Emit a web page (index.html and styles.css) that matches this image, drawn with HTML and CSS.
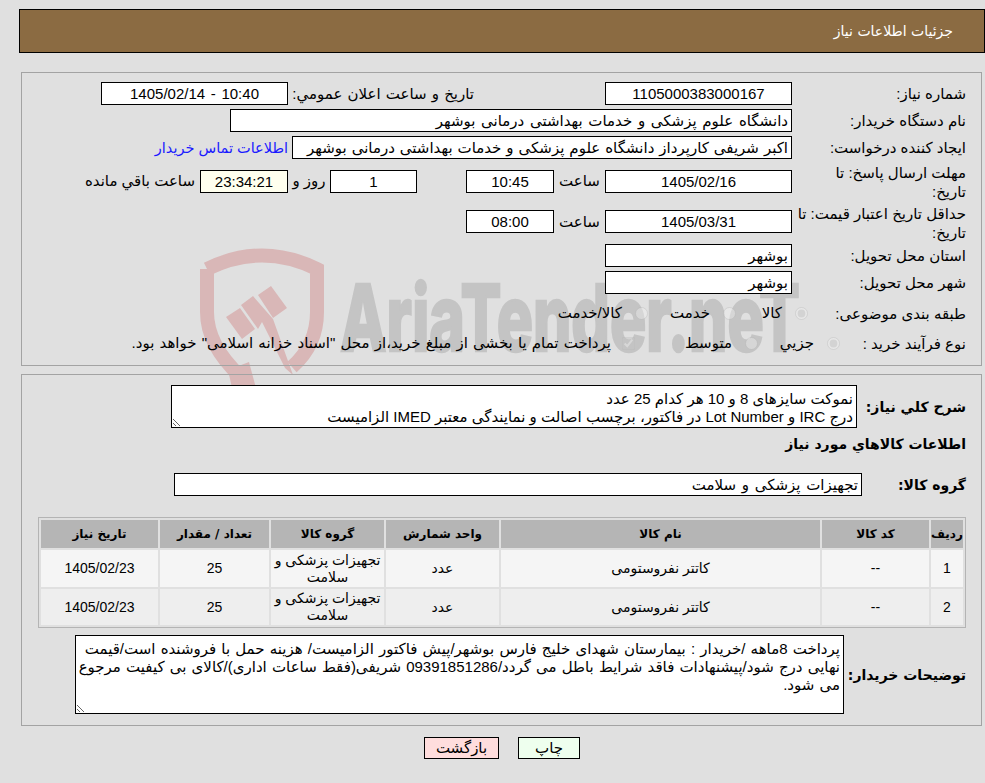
FILE: index.html
```html
<!DOCTYPE html>
<html lang="fa" dir="rtl">
<head>
    <meta charset="UTF-8">
    <meta name="viewport" content="width=device-width, initial-scale=1.0">
    <title>جزئیات اطلاعات نیاز</title>
    <link rel="stylesheet" href="styles.css">
</head>
<body>
    <!-- watermark sits behind the panels -->
    <svg class="watermark" width="985" height="783" viewBox="0 0 985 783" aria-hidden="true">
        <g fill="none" stroke="#d9b7b7" stroke-width="14">
            <path d="M207 269 Q262 242 317 269 L317 312 Q317 345 292 367"/>
            <path d="M207 269 L207 312 Q207 345 240 376"/>
        </g>
        <g fill="#d9b7b7">
            <polygon points="226,317 240,308 255,329 242,339"/>
            <polygon points="241,305 253,296 273,319 293,375 285,368 262,322 258,329"/>
            <polygon points="258,295 271,286 287,308 273,318"/>
            <polygon points="228,370 249,362 256,388 232,388"/>
        </g>
        <text class="watermark-text" x="340" y="351" textLength="460" lengthAdjust="spacingAndGlyphs">AriaTender.neT</text>
    </svg>

    <div class="page">
        <header class="title-bar">جزئیات اطلاعات نیاز</header>

        <section class="panel panel-info">
            <div class="row">
                <label class="row-label">شماره نیاز:</label>
                <input class="field field-md" readonly value="1105000383000167">
                <span class="text text-announce">تاریخ و ساعت اعلان عمومي:</span>
                <input class="field field-md" readonly value="10:40 - 1405/02/14">
            </div>
            <div class="row">
                <label class="row-label">نام دستگاه خریدار:</label>
                <input class="field field-buyer field-start" readonly value="دانشگاه علوم پزشکی و خدمات بهداشتی درمانی بوشهر">
            </div>
            <div class="row">
                <label class="row-label">ایجاد کننده درخواست:</label>
                <input class="field field-creator field-start" readonly value="اکبر شریفی کارپرداز دانشگاه علوم پزشکی و خدمات بهداشتی درمانی بوشهر">
                <a class="contact" href="#">اطلاعات تماس خریدار</a>
            </div>
            <div class="row row-send">
                <label class="row-label label-low">مهلت ارسال پاسخ: تا<br>تاریخ:</label>
                <input class="field field-md" readonly value="1405/02/16">
                <span class="text text-hour">ساعت</span>
                <input class="field field-sm" readonly value="10:45">
                <input class="field field-days" readonly value="1">
                <span class="text text-day">روز و</span>
                <input class="field field-timer" readonly value="23:34:21">
                <span class="text text-left">ساعت باقي مانده</span>
            </div>
            <div class="row row-valid">
                <label class="row-label label-low">حداقل تاریخ اعتبار قیمت: تا<br>تاریخ:</label>
                <input class="field field-md" readonly value="1405/03/31">
                <span class="text text-hour">ساعت</span>
                <input class="field field-sm" readonly value="08:00">
            </div>
            <div class="row">
                <label class="row-label">استان محل تحویل:</label>
                <input class="field field-md field-start" readonly value="بوشهر">
            </div>
            <div class="row">
                <label class="row-label">شهر محل تحویل:</label>
                <input class="field field-md field-start" readonly value="بوشهر">
            </div>
            <div class="row row-options">
                <label class="row-label label-category">طبقه بندی موضوعی:</label>
                <label class="option opt-goods"><input type="radio" name="category" disabled checked>کالا</label>
                <label class="option opt-service"><input type="radio" name="category" disabled>خدمت</label>
                <label class="option"><input type="radio" name="category" disabled>کالا/خدمت</label>
            </div>
            <div class="row row-options">
                <label class="row-label label-process">نوع فرآیند خرید :</label>
                <label class="option opt-minor"><input type="radio" name="process" disabled checked>جزيي</label>
                <label class="option opt-medium"><input type="radio" name="process" disabled>متوسط</label>
                <label class="option option-long"><input type="checkbox" disabled checked>پرداخت تمام یا بخشی از مبلغ خرید،از محل "اسناد خزانه اسلامی" خواهد بود.</label>
            </div>
        </section>

        <section class="panel panel-items">
            <div class="desc-row">
                <label class="bold-label">شرح کلي نیاز:</label>
                <textarea class="box box-desc" readonly>نموکت سایزهای 8 و 10 هر کدام 25 عدد
درج IRC و Lot Number در فاکتور، برچسب اصالت و نمایندگی معتبر IMED الزامیست</textarea>
            </div>
            <h2 class="items-title">اطلاعات کالاهاي مورد نیاز</h2>
            <div class="group-row">
                <label class="bold-label">گروه کالا:</label>
                <input class="field field-group field-start" readonly value="تجهیزات پزشکی و سلامت">
            </div>
            <table class="items">
                <thead>
                    <tr>
                        <th class="col-row">ردیف</th>
                        <th class="col-code">کد کالا</th>
                        <th class="col-name">نام کالا</th>
                        <th class="col-unit">واحد شمارش</th>
                        <th class="col-type">گروه کالا</th>
                        <th class="col-qty">تعداد / مقدار</th>
                        <th class="col-date">تاریخ نیاز</th>
                    </tr>
                </thead>
                <tbody>
                    <tr>
                        <td>1</td>
                        <td>--</td>
                        <td>کاتتر نفروستومی</td>
                        <td>عدد</td>
                        <td>تجهیزات پزشکی و سلامت</td>
                        <td>25</td>
                        <td>1405/02/23</td>
                    </tr>
                    <tr>
                        <td>2</td>
                        <td>--</td>
                        <td>کاتتر نفروستومی</td>
                        <td>عدد</td>
                        <td>تجهیزات پزشکی و سلامت</td>
                        <td>25</td>
                        <td>1405/02/23</td>
                    </tr>
                </tbody>
            </table>
            <div class="notes-row">
                <label class="bold-label">توضیحات خریدار:</label>
                <textarea class="box box-notes" readonly>پرداخت 8ماهه /خریدار : بیمارستان شهدای خلیج فارس بوشهر/پیش فاکتور الزامیست/ هزینه حمل با فروشنده است/قیمت نهایی درج شود/پیشنهادات فاقد شرایط باطل می گردد/09391851286 شریفی(فقط ساعات اداری)/کالای بی کیفیت مرجوع می شود.</textarea>
            </div>
        </section>

        <div class="actions">
            <button class="btn btn-print" type="button">چاپ</button>
            <button class="btn btn-back" type="button">بازگشت</button>
        </div>
    </div>
</body>
</html>
```

FILE: styles.css
```css
html, body {
    margin: 0;
    padding: 0;
    background-color: #e0e0e0;
}
body {
    font-family: "Liberation Sans", "DejaVu Sans", sans-serif;
    font-size: 15px;
    color: #000;
    position: relative;
    height: 783px;
    overflow: hidden;
}
.watermark {
    position: absolute;
    left: 0;
    top: 0;
    direction: ltr;
}
.watermark-text {
    font-family: "Inter", sans-serif;
    font-weight: 800;
    font-size: 92px;
    fill: #c4c4c4;
    stroke: #c4c4c4;
    stroke-width: 2.5px;
    direction: ltr;
}
.page {
    position: relative;
    padding-top: 9px;
}
.title-bar {
    height: 42px;
    line-height: 42px;
    margin-left: 19px;
    padding-right: 31px;
    background-color: #8b6b42;
    border: 1px solid #000;
    color: #fff;
    font-size: 14px;
    font-family: "DejaVu Sans", sans-serif;
}
.panel {
    margin-left: 21px;
    margin-right: 3px;
    border: 1px solid #a3a3a3;
    padding: 0 15px;
}
.panel-info {
    height: 283px;
    margin-top: 19px;
    padding-top: 9px;
}
.row {
    display: flex;
    align-items: center;
    height: 23px;
    margin-bottom: 4px;
}
.row-send { height: 36px; }
.row-valid { height: 37px; }
.row-options {
    height: 30px;
    margin-bottom: 0;
}
.row-label {
    width: 174px;
    flex: none;
    line-height: 19px;
}
.label-low { padding-top: 2px; }
.label-category { width: 158px; }
.label-process { width: 126px; }
.field {
    box-sizing: border-box;
    height: 23px;
    padding: 0 6px;
    border: 1px solid #000;
    background: #fff;
    font-family: inherit;
    font-size: 15px;
    word-spacing: 1.5px;
    color: #000;
    text-align: center;
    outline: none;
}
.field-start { text-align: right; padding: 0 3px; }
.field-md { width: 187px; }
.field-sm { width: 88px; }
.field-buyer { width: 562px; }
.field-creator {
    width: 500px;
    word-spacing: 0.8px;
}
.field-timer {
    width: 88px;
    background: #ffffee;
}
.field-days {
    width: 87px;
    margin-right: 49px;
}
.field-group { width: 688px; }
.text { white-space: nowrap; }
.text-announce {
    width: 181px;
    margin-right: 131px;
    margin-left: 5px;
    text-align: right;
    word-spacing: 1px;
}
.text-hour {
    width: 51px;
    text-align: center;
}
.text-day {
    width: 42px;
    text-align: center;
}
.text-left { margin-right: 5px; }
.contact {
    margin-right: 4px;
    color: #1a1aff;
    font-size: 14.5px;
    text-decoration: none;
}
.option {
    display: flex;
    align-items: center;
    white-space: nowrap;
    flex: none;
}
.option input {
    width: 13px;
    height: 13px;
    margin: 0 0 0 13px;
    opacity: 0.55;
}
.option-long { word-spacing: 1px; }
.option-long input { margin-left: 11px; }
.opt-goods { width: 72px; }
.opt-service { width: 88px; }
.opt-minor { width: 82px; }
.opt-medium { width: 123px; }
.panel-items {
    height: 340px;
    margin-top: 8px;
    padding-top: 10px;
}
.bold-label {
    flex: none;
    font-weight: bold;
    font-size: 14px;
    font-family: "DejaVu Sans", sans-serif;
}
.box {
    display: block;
    box-sizing: border-box;
    border: 1px solid #000;
    background: #fff;
    padding: 4px 3px 2px;
    margin: 0;
    font-family: inherit;
    font-size: 15px;
    line-height: 18px;
    color: #000;
    outline: none;
    overflow: hidden;
}
.desc-row {
    display: flex;
    align-items: center;
    height: 43px;
}
.desc-row .bold-label { width: 109px; }
.box-desc {
    width: 686px;
    height: 43px;
}
.items-title {
    margin: 5px 0 0;
    height: 22px;
    line-height: 22px;
    font-size: 14px;
    font-weight: bold;
    font-family: "DejaVu Sans", sans-serif;
}
.group-row {
    display: flex;
    align-items: center;
    height: 23px;
    margin-top: 18px;
}
.group-row .bold-label { width: 104px; }
.items {
    width: 928px;
    margin-top: 21px;
    border: 1px solid #b4b4b4;
    border-spacing: 2px;
    table-layout: fixed;
}
.items th {
    height: 28px;
    padding: 0;
    background-color: #b5b5b5;
    font-family: "DejaVu Sans", sans-serif;
    font-size: 12px;
    font-weight: bold;
    text-align: center;
}
.items td {
    height: 37px;
    padding: 0 2px;
    background-color: #f5f5f5;
    font-size: 14px;
    line-height: 17px;
    text-align: center;
}
.items tbody tr:nth-child(2) td {
    height: 36px;
    background-color: #eeeeee;
}
.col-row { width: 32px; }
.col-code { width: 107px; }
.col-name { width: 319px; }
.col-unit { width: 113px; }
.col-type { width: 113px; }
.col-qty { width: 109px; }
.notes-row {
    display: flex;
    align-items: center;
    margin-top: 7px;
}
.notes-row .bold-label { width: 122px; }
.box-notes {
    width: 769px;
    height: 79px;
    padding-left: 0;
    word-spacing: 1px;
}
.actions {
    display: flex;
    margin-top: 11px;
    padding-right: 405px;
    gap: 19px;
}
.btn {
    box-sizing: border-box;
    height: 22px;
    border: 1px solid #000;
    font-family: inherit;
    font-size: 15px;
    color: #000;
    padding: 0;
    cursor: pointer;
}
.btn-print {
    width: 62px;
    background-color: #eeffee;
}
.btn-back {
    width: 75px;
    background-color: #ffdddd;
}
```
